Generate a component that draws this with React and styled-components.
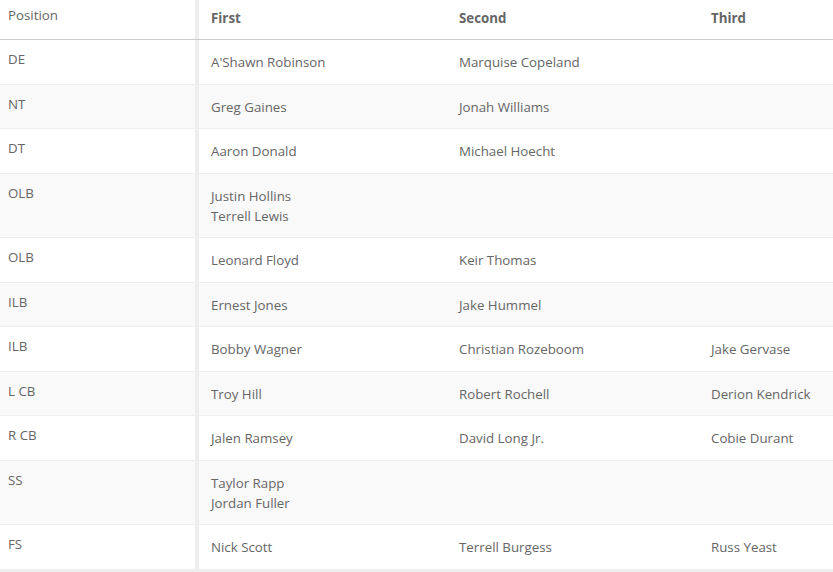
import React from "react";
import styled, { createGlobalStyle } from "styled-components";

const GlobalStyle = createGlobalStyle`
  body {
    margin: 0;
    background: #fff;
    font-family: "Open Sans", "Noto Sans", sans-serif;
  }
`;

const depth = [
  { pos: "DE", first: ["A'Shawn Robinson"], second: "Marquise Copeland", third: "" },
  { pos: "NT", first: ["Greg Gaines"], second: "Jonah Williams", third: "" },
  { pos: "DT", first: ["Aaron Donald"], second: "Michael Hoecht", third: "" },
  { pos: "OLB", first: ["Justin Hollins", "Terrell Lewis"], second: "", third: "" },
  { pos: "OLB", first: ["Leonard Floyd"], second: "Keir Thomas", third: "" },
  { pos: "ILB", first: ["Ernest Jones"], second: "Jake Hummel", third: "" },
  { pos: "ILB", first: ["Bobby Wagner"], second: "Christian Rozeboom", third: "Jake Gervase" },
  { pos: "L CB", first: ["Troy Hill"], second: "Robert Rochell", third: "Derion Kendrick" },
  { pos: "R CB", first: ["Jalen Ramsey"], second: "David Long Jr.", third: "Cobie Durant" },
  { pos: "SS", first: ["Taylor Rapp", "Jordan Fuller"], second: "", third: "" },
  { pos: "FS", first: ["Nick Scott"], second: "Terrell Burgess", third: "Russ Yeast" },
];

export default function App() {
  return (
    <>
      <GlobalStyle />
      <Table>
        <HeaderRow>
          <PosHead>Position</PosHead>
          <ColHead>First</ColHead>
          <ColHead>Second</ColHead>
          <ColHead>Third</ColHead>
        </HeaderRow>
        {depth.map((row, i) => (
          <Row key={i} shaded={i % 2 === 1}>
            <PosCell>{row.pos}</PosCell>
            <NameCell>
              {row.first.map((n) => (
                <div key={n}>{n}</div>
              ))}
            </NameCell>
            <NameCell>{row.second}</NameCell>
            <NameCell>{row.third}</NameCell>
          </Row>
        ))}
      </Table>
    </>
  );
}

const Table = styled.div`
  width: 100%;
  overflow: hidden;
  border-bottom: 4px solid #eeeeee;
  color: #666666;
  font-size: 13.3px;
`;

const grid = `
  display: grid;
  grid-template-columns: 199px 248px 252px 1fr;
`;

const HeaderRow = styled.div`
  ${grid}
  height: 39px;
  border-bottom: 1px solid #cccccc;
  background: #fff;
`;

const PosHead = styled.div`
  padding: 5px 8px 0;
  line-height: 20px;
  border-right: 4px solid #eeeeee;
`;

const ColHead = styled.div`
  padding: 8px 12px 0;
  line-height: 20px;
  font-weight: 700;
`;

const Row = styled.div`
  ${grid}
  background: ${({ shaded }) => (shaded ? "#f9f9f9" : "#ffffff")};
  border-bottom: 1px solid #eeeeee;
  &:last-child {
    border-bottom: none;
  }
`;

const PosCell = styled.div`
  padding: 9px 8px 11.5px;
  line-height: 20px;
  border-right: 4px solid #eeeeee;
`;

const NameCell = styled.div`
  padding: 12px 12px 11.5px;
  line-height: 20px;
`;
